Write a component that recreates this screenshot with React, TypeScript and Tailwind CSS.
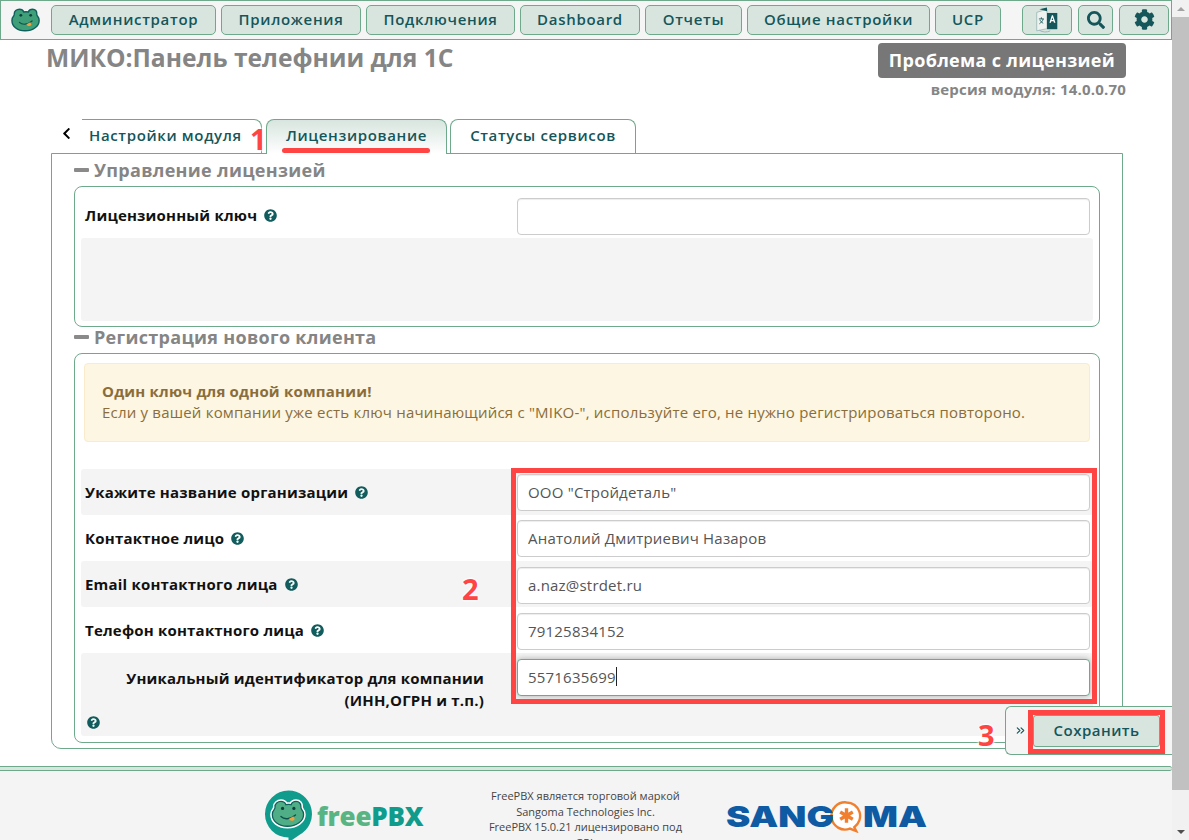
import { FaQuestionCircle, FaSearch, FaCog, FaChevronLeft } from "react-icons/fa";
import { ChevronsRight } from "lucide-react";

const FONT = "[font-family:'Open_Sans','Noto_Sans',sans-serif]";
const FROG = "M8 1.500c2.600 0 4 1.400 4.600 3 1.600-.3 3.200-.3 4.800 0 .6-1.600 2-3 4.600-3 3 0 4.700 2.200 4.500 5-.1 1 .1 1.600.7 2.300 1.200 1.400 1.800 3 1.800 4.700 0 6-6.300 11-15 11S0 19.500 0 13.500c0-1.700.6-3.300 1.800-4.700.6-.7.8-1.300.7-2.300C2.300 3.700 5 1.500 8 1.500z";

function FrogFace() {
  return (
    <>
      <circle cx="9.500" cy="8" r="1.500" fill="#0f3f3c" />
      <circle cx="20" cy="8" r="1.500" fill="#0f3f3c" />
      <path d="M8 15.500c3 3 8.500 2.800 13.500-1.500" fill="none" stroke="#0f4f4c" strokeWidth="1.300" strokeLinecap="round" />
      <path d="M15.500 17.500l4-2.200 1.300 2.500c-1 2-4 2.500-5.300-.3z" fill="#f0a03c" />
    </>
  );
}

function Frog({ className }: { className?: string }) {
  return (
    <svg viewBox="-1 0 32 26" className={className}>
      <path d={FROG} fill="#3f9f78" stroke="#0f5f5c" strokeWidth="1.500" />
      <FrogFace />
    </svg>
  );
}

function Help({ className = "" }: { className?: string }) {
  return <FaQuestionCircle className={`text-[#115c5c] text-[13px] ${className}`} />;
}

function NavBtn({ label, w }: { label: string; w: string }) {
  return (
    <button className={`${w} h-[30px] rounded-[5px] border border-[#6fa98c] bg-[#d8e5df] text-[#14565a] text-[15px] font-semibold tracking-[0.7px] flex items-center justify-center shrink-0`}>
      {label}
    </button>
  );
}

function IconBtn({ w, children }: { w: string; children: React.ReactNode }) {
  return (
    <button className={`${w} h-[30px] rounded-[5px] border border-[#6fa98c] bg-[#d8e5df] text-[#14565a] flex items-center justify-center shrink-0`}>
      {children}
    </button>
  );
}

function Legend({ children }: { children: React.ReactNode }) {
  return (
    <div className="h-[26px] flex items-center pb-[6px]">
      <span className="w-[15px] h-[4px] rounded-[1px] bg-[#8a8a8a] mr-[5px]" />
      <span className="text-[#858585] text-[18px] font-bold tracking-[0.3px] leading-none">{children}</span>
    </div>
  );
}

function Field({ value, focused, caret }: { value: string; focused?: boolean; caret?: boolean }) {
  return (
    <div className="relative w-[573px]">
      <input
        readOnly
        value={value}
        className={`w-full h-[37px] rounded-[4px] border bg-white px-[10px] pb-[2px] text-[15px] tracking-[0.2px] text-[#555] outline-none ${
          focused ? "border-[#6fa98c] shadow-[0_0_6px_rgba(0,0,0,0.3)]" : "border-[#ccc] shadow-[inset_0_1px_1px_rgba(0,0,0,0.075)]"
        }`}
      />
      {caret && <span className="absolute left-[99px] top-[8px] h-[19px] w-px bg-[#222]" />}
    </div>
  );
}

function FormRow({ label, value, gray, pt, labelH }: { label: string; value: string; gray?: boolean; pt: string; labelH: string }) {
  return (
    <div className={`flex h-[46px] rounded-[3px] ${pt} ${gray ? "bg-[#f4f4f4]" : ""}`}>
      <div className={`w-[436px] pl-[4px] flex items-center gap-[7px] ${labelH} text-[15px] font-bold tracking-[0.2px] text-[#111]`}>
        <span>{label}</span>
        <Help />
      </div>
      <Field value={value} />
    </div>
  );
}

function Digit({ children, className }: { children: React.ReactNode; className: string }) {
  return (
    <span className={`absolute z-20 text-[#ff4444] font-bold text-[29px] leading-none [text-shadow:0_0_3px_#fff,0_0_3px_#fff,0_0_3px_#fff] ${className}`}>
      {children}
    </span>
  );
}

export default function App() {
  return (
    <div className={`relative w-[1189px] h-[840px] overflow-hidden bg-white flex ${FONT}`}>
      <div className="w-[1172px] h-full flex flex-col shrink-0">
        {/* navbar */}
        <nav className="h-[40px] shrink-0 border border-[#6fa98c] bg-[#f5f5f5] flex items-center pl-[10px] pb-px">
          <Frog className="w-[30px] h-[26px] mr-[10px] shrink-0" />
          <div className="flex gap-[5px]">
            <NavBtn label="Администратор" w="w-[165px]" />
            <NavBtn label="Приложения" w="w-[140px]" />
            <NavBtn label="Подключения" w="w-[149px]" />
            <NavBtn label="Dashboard" w="w-[120px]" />
            <NavBtn label="Отчеты" w="w-[97px]" />
            <NavBtn label="Общие настройки" w="w-[183px]" />
            <NavBtn label="UCP" w="w-[66px]" />
          </div>
          <div className="flex gap-[6px] ml-[21px]">
            <IconBtn w="w-[50px]">
              <svg viewBox="0 0 24 24" className="w-[26px] h-[26px]">
                <path d="M2.500 5l9.500-3v18l-9.500 2z" fill="#eef3f0" stroke="#8aa" strokeWidth=".6" />
                <path d="M5 2l7 2V.500z" fill="#14565a" />
                <path d="M12 5.500h9.500v15H12z" fill="#14565a" />
                <path d="M16.500 7.500l-2.300 7h1.400l.4-1.300h2l.4 1.300h1.400l-2.300-7zm.5 2.200l.7 2.300h-1.400z" fill="#fff" />
                <path d="M4.500 11h4.500M6.800 9.500v1.500M5 15.500c1.500-1 3-2.500 3.500-4.500M5.500 12c.6 1.200 1.500 2.200 3 3" fill="none" stroke="#14565a" strokeWidth=".8" />
                <path d="M5 21.500c3 2 7 2 10 .5" fill="none" stroke="#9ab" strokeWidth=".8" />
              </svg>
            </IconBtn>
            <IconBtn w="w-[35px]"><FaSearch className="text-[18px]" /></IconBtn>
            <IconBtn w="w-[50px]"><FaCog className="text-[21px]" /></IconBtn>
          </div>
        </nav>

        {/* page header */}
        <header className="h-[79px] shrink-0 pl-[46px] pr-[46px] pt-[3px] flex justify-between">
          <h1 className="text-[24.600px] font-bold leading-[30px] text-[#858585]">МИКО:Панель телефнии для 1С</h1>
          <div className="flex flex-col items-end">
            <div className="h-[35px] px-[11px] rounded-[4px] bg-[#777] text-white text-[18px] font-bold flex items-center tracking-[0.3px]">Проблема с лицензией</div>
            <div className="mt-[1px] text-[15px] font-bold tracking-[0.2px] text-[#858585] leading-[20px]">версия модуля: 14.0.0.70</div>
          </div>
        </header>

        {/* tabs */}
        <div className="relative z-10 h-[35px] -mb-px shrink-0 flex ml-[60px] text-[#14565a] text-[15px] font-semibold tracking-[0.65px]">
          <div className="w-[22px] flex items-start pt-[8px]"><FaChevronLeft className="text-[13px] text-black" /></div>
          <div className="w-[180px] h-[34px] border-t border-r border-[#6fa98c] rounded-tr-[8px] flex items-center pl-[7px] pb-[2px]">Настройки модуля</div>
          <div className="ml-[4px] w-[181px] h-[35px] border border-b-0 border-[#6fa98c] rounded-t-[8px] bg-gradient-to-b from-[#d8e5df] to-white flex items-center justify-center pb-[3px]">Лицензирование</div>
          <div className="ml-[3px] w-[186px] h-[34px] border border-b-0 border-[#6fa98c] rounded-t-[8px] flex items-center justify-center pb-[2px]">Статусы сервисов</div>
        </div>

        {/* panel */}
        <main className="ml-[51px] w-[1072px] h-[596px] shrink-0 border border-[#6fa98c] rounded-b-[10px] px-[22px] pt-[6px]">
          <Legend>Управление лицензией</Legend>
          <section className="h-[141px] border border-[#6fa98c] rounded-[8px] px-[6px] pt-[11px]">
            <div className="flex">
              <div className="w-[436px] pl-[4px] h-[35px] flex items-center gap-[7px] text-[15px] font-bold tracking-[0.2px] text-[#111]">
                <span>Лицензионный ключ</span>
                <Help />
              </div>
              <Field value="" />
            </div>
            <div className="mt-[3px] h-[83px] bg-[#f4f4f4] rounded-[3px]" />
          </section>
          <Legend>Регистрация нового клиента</Legend>
          <section className="h-[390px] border border-[#6fa98c] rounded-[8px] px-[6px] pt-[9px]">
            <div className="mx-[3px] h-[79px] rounded-[4px] border border-[#faebcc] bg-[#fcf6e2] px-[17px] pb-[2px] flex flex-col justify-center text-[15px] tracking-[0.2px] leading-[21px] text-[#8a6d3b]">
              <b className="font-bold">Один ключ для одной компании!</b>
              <span>Если у вашей компании уже есть ключ начинающийся с "MIKO-", используйте его, не нужно регистрироваться повтороно.</span>
            </div>
            <div className="mt-[27px]">
              <FormRow gray pt="pt-[5px]" labelH="h-[37px]" label="Укажите название организации" value='ООО "Стройдеталь"' />
              <FormRow pt="pt-[5px]" labelH="h-[37px]" label="Контактное лицо" value="Анатолий Дмитриевич Назаров" />
              <FormRow gray pt="pt-[6px]" labelH="h-[35px]" label="Email контактного лица" value="a.naz@strdet.ru" />
              <FormRow pt="pt-[6px]" labelH="h-[35px]" label="Телефон контактного лица" value="79125834152" />
              <div className="flex h-[83px] rounded-[3px] bg-[#f4f4f4] pt-[6px]">
                <div className="w-[436px] text-[15px] font-bold tracking-[0.2px] text-[#111] leading-[22px]">
                  <div className="text-right pr-[33px] pt-[8px]">Уникальный идентификатор для компании<br />(ИНН,ОГРН и т.п.)</div>
                  <Help className="ml-[6px] mt-[5px]" />
                </div>
                <Field value="5571635699" focused caret />
              </div>
            </div>
          </section>
        </main>

        {/* footer */}
        <div className="mt-[17px] h-[5px] shrink-0 border-y border-[#6fa98c] bg-[#d8e5df] rounded-r-[3px]" />
        <footer className="flex-1 bg-[#f4f4f4] flex overflow-hidden">
          <div className="ml-[264px] mt-[19px] flex items-start">
            <svg viewBox="0 0 50 54" className="w-[49px] h-[53px] shrink-0">
              <path d="M25 .500a24 24 0 0 1 11 45.300L25 53.500V48.500A24 24 0 0 1 25 .500z" fill="#0f9c8c" />
              <g transform="translate(8.500 10) scale(1.100)">
                <path d={FROG} fill="#fff" stroke="#fff" strokeWidth="4" />
                <path d={FROG} fill="#4fae85" stroke="#0f5f5c" strokeWidth="1.200" />
                <FrogFace />
              </g>
            </svg>
            <div className="ml-[4px] mt-[9px] text-[26px] leading-[34px] font-extrabold tracking-[-0.2px]">
              <span className="text-[#58b583]">free</span><span className="text-[#0f9c8c]">PBX</span>
            </div>
          </div>
          <div className="ml-[59px] w-[206px] mt-[17px] text-center text-[11px] leading-[15.500px] text-[#444]">
            <div>FreePBX является торговой маркой</div>
            <div>Sangoma Technologies Inc.</div>
            <div>FreePBX 15.0.21 лицензировано под</div>
            <div>GPL</div>
          </div>
          <div className="ml-[38px] mt-[29px] h-[33px] flex items-center text-[#0e5ba4] text-[29px] leading-none font-black [font-family:Inter,sans-serif]">
            <span className="block w-[104px] origin-left scale-x-[1.260] whitespace-nowrap">SANG</span>
            <svg viewBox="0 0 34 34" className="w-[33px] h-[33px] shrink-0">
              <path d="M17 2.500a14 14 0 0 1 8 25.500l2 4-6.500-2.500A14 14 0 1 1 17 2.500z" fill="#fff" stroke="#f08030" strokeWidth="2.500" />
              <path d="M17 8.500v15M10.500 12.300l13 7.500M23.500 12.300l-13 7.500" stroke="#f08030" strokeWidth="3.500" />
            </svg>
            <span className="block w-[60px] origin-left scale-x-[1.260] whitespace-nowrap">MA</span>
          </div>
        </footer>
      </div>

      {/* browser scrollbar */}
      <div className="w-[17px] h-full bg-[#f1f1f1] flex flex-col items-center shrink-0">
        <div className="h-[17px] flex items-center justify-center">
          <span className="w-0 h-0 border-x-[4px] border-x-transparent border-b-[4px] border-b-[#a3a3a3]" />
        </div>
        <div className="w-full h-[773px] bg-[#c1c1c1]" />
        <div className="flex-1" />
        <div className="h-[17px] flex items-center justify-center">
          <span className="w-0 h-0 border-x-[4px] border-x-transparent border-t-[4px] border-t-[#505050]" />
        </div>
      </div>

      {/* floating save bar */}
      <div className="absolute left-[1005px] top-[706px] w-[167px] h-[49px] border border-r-0 border-[#6fa98c] rounded-l-[6px] bg-[#f5f5f5] flex items-center pl-[8px]">
        <ChevronsRight size={13} strokeWidth={2} className="text-[#14565a]" />
        <button className="ml-[6px] w-[127px] h-[32px] rounded-[3px] border border-[#6fa98c] bg-[#d8e5df] text-[#14565a] text-[15px] font-semibold tracking-[0.5px]">Сохранить</button>
      </div>

      {/* annotations */}
      <span className="absolute z-20 left-[282px] top-[148px] w-[148px] h-[5px] rounded-full bg-[#ff4444]" />
      <div className="absolute z-20 left-[511px] top-[468px] w-[586px] h-[236px] border-[5px] border-[#ff4444]" />
      <div className="absolute z-20 left-[1028px] top-[710px] w-[137px] h-[44px] border-[5px] border-[#ff4444]" />
      <Digit className="left-[250px] top-[124px]">1</Digit>
      <Digit className="left-[462px] top-[574px]">2</Digit>
      <Digit className="left-[978px] top-[720px]">3</Digit>
    </div>
  );
}
